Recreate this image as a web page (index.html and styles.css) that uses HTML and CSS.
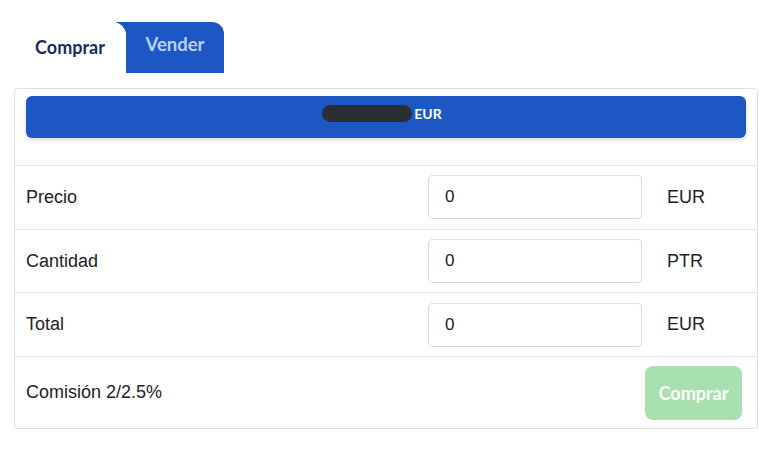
FILE: index.html
```html
<!DOCTYPE html>
<html lang="es">
<head>
    <meta charset="UTF-8">
    <meta name="viewport" content="width=device-width, initial-scale=1.0">
    <title>Comprar / Vender</title>
    <link rel="stylesheet" href="styles.css">
</head>
<body>
    <div class="tabs">
        <div class="tab tab-active">Comprar</div>
        <div class="tab tab-other">Vender</div>
    </div>

    <div class="card">
        <div class="card-header">
            <div class="pair-bar">
                <span class="redacted"></span><span class="pair-currency">EUR</span>
            </div>
        </div>

        <div class="row">
            <span class="row-label">Precio</span>
            <input class="row-input" type="text" value="0">
            <span class="row-unit">EUR</span>
        </div>
        <div class="row">
            <span class="row-label">Cantidad</span>
            <input class="row-input" type="text" value="0">
            <span class="row-unit">PTR</span>
        </div>
        <div class="row">
            <span class="row-label">Total</span>
            <input class="row-input" type="text" value="0">
            <span class="row-unit">EUR</span>
        </div>
        <div class="row row-footer">
            <span class="row-label">Comisión 2/2.5%</span>
            <button class="buy-button" disabled>Comprar</button>
        </div>
    </div>
</body>
</html>
```

FILE: styles.css
```css
body {
    margin: 0;
    padding: 22px 1px 0 14px;
    background-color: #fff;
    font-family: "Liberation Sans", Arial, sans-serif;
    color: #222;
}
.tabs {
    display: flex;
    height: 51px;
    margin-bottom: 15px;
}
.tab {
    font-family: Lato, sans-serif;
    font-weight: bold;
    font-size: 18px;
    text-align: center;
}
.tab-active {
    width: 112px;
    padding-top: 14px;
    color: #1b2a5c;
}
.tab-other {
    position: relative;
    width: 98px;
    padding-top: 11px;
    background-color: #1c57c4;
    color: #bcd1f7;
    font-size: 18.5px;
    border-top-right-radius: 12px;
}
.tab-other::before {
    content: "";
    position: absolute;
    left: -14px;
    top: 0;
    width: 14px;
    height: 14px;
    background: radial-gradient(circle at 0 100%, transparent 14px, #1c57c4 14.5px);
}
.card {
    border: 1px solid #dedede;
    border-radius: 4px;
}
.card-header {
    padding: 7px 11px 27px;
    border-bottom: 1px solid #e6e6e6;
}
.pair-bar {
    display: flex;
    align-items: center;
    justify-content: center;
    box-sizing: border-box;
    height: 42px;
    padding: 0 8px 7px 0;
    background-color: #1c57c4;
    border-radius: 6px;
    box-shadow: 0 2px 4px rgba(0, 0, 0, 0.15);
}
.redacted {
    display: inline-block;
    width: 90px;
    height: 17px;
    border-radius: 9px;
    background-color: #2b2e33;
}
.pair-currency {
    margin-left: 2px;
    font-family: Lato, sans-serif;
    font-weight: bold;
    font-size: 14px;
    color: #fff;
}
.row {
    display: flex;
    align-items: center;
    height: 62.7px;
    padding: 0 12px 0 11px;
    border-bottom: 1px solid #e6e6e6;
    font-size: 18px;
}
.row-label {
    flex: 1;
}
.row-input {
    box-sizing: border-box;
    width: 214px;
    height: 44px;
    padding: 0 16px;
    border: 1px solid #dcdcdc;
    border-radius: 4px;
    font-family: "Liberation Sans", Arial, sans-serif;
    font-size: 17px;
    color: #222;
}
.row-unit {
    width: 78px;
    margin-left: 25px;
}
.row-footer {
    height: 71px;
    padding-right: 15px;
    border-bottom: none;
}
.buy-button {
    width: 97px;
    height: 54px;
    background-color: #a8e0b0;
    color: #fff;
    border: none;
    border-radius: 8px;
    font-family: Lato, sans-serif;
    font-weight: bold;
    font-size: 18px;
}
```
